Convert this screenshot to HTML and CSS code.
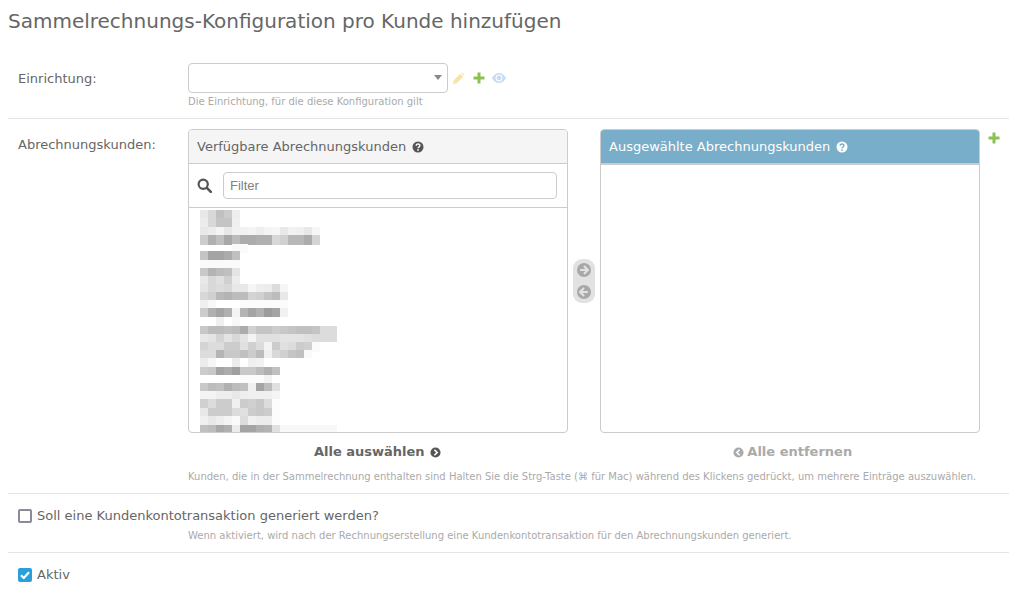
FILE: index.html
```html
<!DOCTYPE html>
<html lang="de">
<head>
<meta charset="utf-8">
<title>Sammelrechnungs-Konfiguration</title>
<link rel="stylesheet" href="styles.css">
</head>
<body>
<h1 class="title">Sammelrechnungs-Konfiguration pro Kunde hinzufügen</h1>
<section class="row row-facility">
  <label class="label label-facility">Einrichtung:</label>
  <div class="field">
    <div class="select-line">
      <div class="select"><span class="caret"></span></div>
      <svg class="rel-icon" viewBox="0 0 14 14"><path fill="#f6e3a6" d="M1 13l1-4 7-7 3 3-7 7zM10 1l1-.5 2.500 2.500-.5 1z"/></svg>
      <svg class="rel-icon plus" viewBox="0 0 12 12"><path fill="#8cc152" d="M4.500 .5h3v4H11.500v3H7.500v4h-3v-4H.5v-3h4z"/></svg>
      <svg class="rel-icon eye" viewBox="0 0 14 10"><path fill="#c6dcf0" d="M7 0c3 0 5.500 2 7 5-1.500 3-4 5-7 5S1.500 8 0 5c1.500-3 4-5 7-5z"/><circle cx="7" cy="5" r="3.400" fill="#fff"/><circle cx="7" cy="5" r="2.400" fill="#c6dcf0"/></svg>
    </div>
    <p class="hint hint-first">Die Einrichtung, für die diese Konfiguration gilt</p>
  </div>
</section>
<section class="row row-customers">
  <label class="label">Abrechnungskunden:</label>
  <div class="field">
    <div class="dual">
      <div class="panel">
        <div class="panel-head">Verfügbare Abrechnungskunden
          <svg class="help" viewBox="0 0 12 12"><circle cx="6" cy="6" r="5.500" fill="#555"/><path d="M4.200 4.700c0-2.300 3.700-2.300 3.700-.1 0 1.500-1.900 1.300-1.900 2.700" fill="none" stroke="#f5f5f5" stroke-width="1.500"/><rect x="5.200" y="8.200" width="1.600" height="1.600" fill="#f5f5f5"/></svg>
        </div>
        <div class="filter-bar">
          <svg class="search" viewBox="0 0 15 15"><circle cx="6.200" cy="6.200" r="4.600" fill="none" stroke="#555" stroke-width="2.200"/><path d="M9.800 9.800l4 4" stroke="#555" stroke-width="2.600" stroke-linecap="round"/></svg>
          <div class="filter">Filter</div>
        </div>
        <div class="list">
          <svg class="mosaic" width="137" height="225" viewBox="0 0 137 225" shape-rendering="crispEdges">
            <g transform="translate(0 0)"><rect x="0" width="8" fill="#e8e8e8"/><rect x="8" width="8" fill="#d8d8d8"/><rect x="16" width="8" fill="#c0c0c0"/><rect x="24" width="8" fill="#cccccc"/><rect x="32" width="8" fill="#eeeeee"/></g>
            <g transform="translate(0 8)"><rect x="0" width="8" fill="#ececec"/><rect x="8" width="8" fill="#d8d8d8"/><rect x="16" width="8" fill="#c4c4c4"/><rect x="24" width="8" fill="#c4c4c4"/><rect x="32" width="8" fill="#f0f0f0"/></g>
            <g transform="translate(0 17)"><rect x="0" width="8" fill="#e8e8e8"/><rect x="8" width="8" fill="#ececec"/><rect x="16" width="8" fill="#f4f4f4"/><rect x="24" width="8" fill="#e8e8e8"/><rect x="32" width="8" fill="#f2f2f2"/><rect x="40" width="8" fill="#f2f2f2"/><rect x="48" width="8" fill="#f4f4f4"/><rect x="56" width="8" fill="#eeeeee"/><rect x="64" width="8" fill="#f4f4f4"/><rect x="72" width="8" fill="#f6f6f6"/><rect x="80" width="8" fill="#e8e8e8"/><rect x="88" width="8" fill="#f2f2f2"/><rect x="96" width="8" fill="#f0f0f0"/><rect x="104" width="8" fill="#e8e8e8"/><rect x="112" width="8" fill="#f6f6f6"/></g>
            <g transform="translate(0 25)"><rect x="0" width="8" fill="#cccccc"/><rect x="8" width="8" fill="#b0b0b0"/><rect x="16" width="8" fill="#c0c0c0"/><rect x="24" width="8" fill="#a8a8a8"/><rect x="32" width="8" fill="#bcbcbc"/><rect x="40" width="8" fill="#acacac"/><rect x="48" width="8" fill="#acacac"/><rect x="56" width="8" fill="#b0b0b0"/><rect x="64" width="8" fill="#b0b0b0"/><rect x="72" width="8" fill="#d8d8d8"/><rect x="80" width="8" fill="#d0d0d0"/><rect x="88" width="8" fill="#b8b8b8"/><rect x="96" width="8" fill="#b8b8b8"/><rect x="104" width="8" fill="#acacac"/><rect x="112" width="8" fill="#d4d4d4"/></g>
            <g transform="translate(0 33.500)"><rect x="32" width="16" fill="#fafafa"/></g>
            <g transform="translate(0 41)"><rect x="0" width="8" fill="#c4c4c4"/><rect x="8" width="8" fill="#a4a4a4"/><rect x="16" width="8" fill="#a4a4a4"/><rect x="24" width="8" fill="#acacac"/><rect x="32" width="8" fill="#c0c0c0"/></g>
            <g transform="translate(0 50)"><rect x="0" width="40" fill="#fafafa"/></g>
            <g transform="translate(0 58)"><rect x="0" width="8" fill="#c8c8c8"/><rect x="8" width="8" fill="#b4b4b4"/><rect x="16" width="8" fill="#bcbcbc"/><rect x="24" width="8" fill="#c0c0c0"/><rect x="32" width="8" fill="#e4e4e4"/></g>
            <g transform="translate(0 66)"><rect x="0" width="8" fill="#e8e8e8"/><rect x="8" width="8" fill="#d8d8d8"/><rect x="16" width="8" fill="#e0e0e0"/><rect x="24" width="8" fill="#d0d0d0"/><rect x="32" width="8" fill="#ececec"/></g>
            <g transform="translate(0 74)"><rect x="0" width="8" fill="#e4e4e4"/><rect x="8" width="8" fill="#d8d8d8"/><rect x="16" width="8" fill="#dcdcdc"/><rect x="24" width="8" fill="#d8d8d8"/><rect x="32" width="8" fill="#e8e8e8"/><rect x="40" width="8" fill="#e8e8e8"/><rect x="48" width="8" fill="#f6f6f6"/><rect x="56" width="8" fill="#eeeeee"/><rect x="64" width="8" fill="#ececec"/><rect x="72" width="8" fill="#dcdcdc"/><rect x="80" width="8" fill="#f6f6f6"/></g>
            <g transform="translate(0 82)"><rect x="0" width="8" fill="#d8d8d8"/><rect x="8" width="8" fill="#d0d0d0"/><rect x="16" width="8" fill="#b8b8b8"/><rect x="24" width="8" fill="#b4b4b4"/><rect x="32" width="8" fill="#bcbcbc"/><rect x="40" width="8" fill="#bcbcbc"/><rect x="48" width="8" fill="#d4d4d4"/><rect x="56" width="8" fill="#d0d0d0"/><rect x="64" width="8" fill="#c4c4c4"/><rect x="72" width="8" fill="#bcbcbc"/><rect x="80" width="8" fill="#e8e8e8"/></g>
            <g transform="translate(0 90)"><rect x="0" width="8" fill="#f0f0f0"/><rect x="8" width="8" fill="#f8f8f8"/><rect x="16" width="24" fill="#ffffff"/><rect x="40" width="48" fill="#fbfbfb"/></g>
            <g transform="translate(0 98)"><rect x="0" width="8" fill="#cccccc"/><rect x="8" width="8" fill="#b0b0b0"/><rect x="16" width="8" fill="#a4a4a4"/><rect x="24" width="8" fill="#b0b0b0"/><rect x="32" width="8" fill="#f4f4f4"/><rect x="40" width="8" fill="#b4b4b4"/><rect x="48" width="8" fill="#a4a4a4"/><rect x="56" width="8" fill="#b0b0b0"/><rect x="64" width="8" fill="#9c9c9c"/><rect x="72" width="8" fill="#a4a4a4"/><rect x="80" width="8" fill="#f2f2f2"/></g>
            <g transform="translate(0 106.500)"><rect x="0" width="88" fill="#ffffff"/><rect x="16" width="8" fill="#f0f0f0"/><rect x="32" width="8" fill="#f8f8f8"/></g>
            <g transform="translate(0 116)"><rect x="0" width="8" fill="#c8c8c8"/><rect x="8" width="8" fill="#bcbcbc"/><rect x="16" width="8" fill="#bcbcbc"/><rect x="24" width="8" fill="#c0c0c0"/><rect x="32" width="8" fill="#bcbcbc"/><rect x="40" width="8" fill="#acacac"/><rect x="48" width="8" fill="#d0d0d0"/><rect x="56" width="8" fill="#c4c4c4"/><rect x="64" width="8" fill="#c4c4c4"/><rect x="72" width="8" fill="#cccccc"/><rect x="80" width="8" fill="#c8c8c8"/><rect x="88" width="8" fill="#c4c4c4"/><rect x="96" width="8" fill="#c0c0c0"/><rect x="104" width="8" fill="#c0c0c0"/><rect x="112" width="8" fill="#c4c4c4"/><rect x="120" width="17" fill="#dcdcdc"/></g>
            <g transform="translate(0 124)"><rect x="0" width="8" fill="#e8e8e8"/><rect x="8" width="8" fill="#e4e4e4"/><rect x="16" width="8" fill="#d4d4d4"/><rect x="24" width="8" fill="#e4e4e4"/><rect x="32" width="8" fill="#d8d8d8"/><rect x="40" width="8" fill="#e4e4e4"/><rect x="48" width="8" fill="#f4f4f4"/><rect x="56" width="24" fill="#e0e0e0"/><rect x="80" width="24" fill="#e4e4e4"/><rect x="104" width="8" fill="#e0e0e0"/><rect x="112" width="25" fill="#dcdcdc"/></g>
            <g transform="translate(0 132)"><rect x="0" width="8" fill="#d4d4d4"/><rect x="8" width="16" fill="#dcdcdc"/><rect x="24" width="16" fill="#cccccc"/><rect x="40" width="8" fill="#e0e0e0"/><rect x="48" width="8" fill="#d0d0d0"/><rect x="56" width="8" fill="#dcdcdc"/><rect x="64" width="8" fill="#f4f4f4"/><rect x="72" width="8" fill="#cccccc"/><rect x="80" width="8" fill="#e0e0e0"/><rect x="88" width="8" fill="#dcdcdc"/><rect x="96" width="8" fill="#cccccc"/><rect x="104" width="8" fill="#d0d0d0"/><rect x="112" width="8" fill="#fafafa"/><rect x="120" width="17" fill="#ffffff"/></g>
            <g transform="translate(0 140)"><rect x="0" width="16" fill="#dcdcdc"/><rect x="16" width="8" fill="#b4b4b4"/><rect x="24" width="16" fill="#c8c8c8"/><rect x="40" width="8" fill="#c0c0c0"/><rect x="48" width="8" fill="#cccccc"/><rect x="56" width="8" fill="#bcbcbc"/><rect x="64" width="8" fill="#f0f0f0"/><rect x="72" width="8" fill="#d8d8d8"/><rect x="80" width="8" fill="#d0d0d0"/><rect x="88" width="8" fill="#c4c4c4"/><rect x="96" width="8" fill="#c0c0c0"/><rect x="104" width="8" fill="#fafafa"/></g>
            <g transform="translate(0 148)"><rect x="0" width="112" fill="#ffffff"/><rect x="0" width="8" fill="#ececec"/><rect x="8" width="8" fill="#f6f6f6"/><rect x="32" width="8" fill="#ececec"/><rect x="48" width="8" fill="#f0f0f0"/><rect x="56" width="8" fill="#f2f2f2"/></g>
            <g transform="translate(0 156.500)"><rect x="0" width="8" fill="#cccccc"/><rect x="8" width="8" fill="#c8c8c8"/><rect x="16" width="8" fill="#a4a4a4"/><rect x="24" width="8" fill="#acacac"/><rect x="32" width="8" fill="#a0a0a0"/><rect x="40" width="16" fill="#c8c8c8"/><rect x="56" width="8" fill="#bcbcbc"/><rect x="64" width="8" fill="#b0b0b0"/><rect x="72" width="8" fill="#c0c0c0"/></g>
            <g transform="translate(0 165)"><rect x="0" width="80" fill="#ffffff"/><rect x="40" width="24" fill="#fbfbfb"/><rect x="64" width="8" fill="#f2f2f2"/></g>
            <g transform="translate(0 173)"><rect x="0" width="8" fill="#c8c8c8"/><rect x="8" width="8" fill="#bcbcbc"/><rect x="16" width="8" fill="#c0c0c0"/><rect x="24" width="8" fill="#b0b0b0"/><rect x="32" width="8" fill="#bcbcbc"/><rect x="40" width="8" fill="#c0c0c0"/><rect x="48" width="8" fill="#f0f0f0"/><rect x="56" width="8" fill="#a4a4a4"/><rect x="64" width="8" fill="#bcbcbc"/><rect x="72" width="8" fill="#e0e0e0"/></g>
            <g transform="translate(0 181)"><rect x="0" width="16" fill="#f4f4f4"/><rect x="16" width="16" fill="#eeeeee"/><rect x="32" width="8" fill="#e8e8e8"/><rect x="40" width="8" fill="#eeeeee"/><rect x="48" width="24" fill="#f0f0f0"/><rect x="72" width="8" fill="#f4f4f4"/></g>
            <g transform="translate(0 189)"><rect x="0" width="8" fill="#d0d0d0"/><rect x="8" width="8" fill="#dcdcdc"/><rect x="16" width="16" fill="#cccccc"/><rect x="32" width="8" fill="#f0f0f0"/><rect x="40" width="8" fill="#cccccc"/><rect x="48" width="8" fill="#d0d0d0"/><rect x="56" width="8" fill="#c8c8c8"/><rect x="64" width="8" fill="#dcdcdc"/><rect x="72" width="8" fill="#fcfcfc"/></g>
            <g transform="translate(0 197.500)"><rect x="0" width="8" fill="#e8e8e8"/><rect x="8" width="24" fill="#cccccc"/><rect x="32" width="8" fill="#dcdcdc"/><rect x="40" width="8" fill="#e0e0e0"/><rect x="48" width="8" fill="#cccccc"/><rect x="56" width="8" fill="#c8c8c8"/><rect x="64" width="8" fill="#cccccc"/><rect x="72" width="8" fill="#fcfcfc"/></g>
            <g transform="translate(0 206)"><rect x="0" width="8" fill="#f0f0f0"/><rect x="8" width="8" fill="#e8e8e8"/><rect x="16" width="8" fill="#eeeeee"/><rect x="24" width="8" fill="#f4f4f4"/><rect x="32" width="8" fill="#fafafa"/><rect x="40" width="8" fill="#dcdcdc"/><rect x="48" width="8" fill="#f0f0f0"/><rect x="56" width="16" fill="#ececec"/><rect x="72" width="8" fill="#fcfcfc"/></g>
            <g transform="translate(0 214.500)"><rect x="0" width="8" fill="#c0c0c0"/><rect x="8" width="8" fill="#bcbcbc"/><rect x="16" width="8" fill="#a8a8a8"/><rect x="24" width="8" fill="#b0b0b0"/><rect x="32" width="8" fill="#ececec"/><rect x="40" width="16" fill="#a4a4a4"/><rect x="56" width="8" fill="#b0b0b0"/><rect x="64" width="8" fill="#b4b4b4"/><rect x="72" width="8" fill="#e0e0e0"/><rect x="80" width="57" fill="#f8f8f8"/></g>
          </svg>
        </div>
      </div>
      <div class="movers">
        <svg class="mover" viewBox="0 0 16 16"><circle cx="8" cy="8" r="8" fill="#a8a8a8"/><path d="M8 3.500L12.500 8 8 12.500M12 8H3.500" fill="none" stroke="#e2e2e2" stroke-width="2.400"/></svg>
        <svg class="mover" viewBox="0 0 16 16"><circle cx="8" cy="8" r="8" fill="#a8a8a8"/><path d="M8 3.500L3.500 8 8 12.500M4 8h8.500" fill="none" stroke="#e2e2e2" stroke-width="2.400"/></svg>
      </div>
      <div class="panel">
        <div class="panel-head panel-head-blue">Ausgewählte Abrechnungskunden
          <svg class="help" viewBox="0 0 12 12"><circle cx="6" cy="6" r="5.500" fill="#fff"/><path d="M4.200 4.700c0-2.300 3.700-2.300 3.700-.1 0 1.500-1.900 1.300-1.900 2.700" fill="none" stroke="#78aeca" stroke-width="1.500"/><rect x="5.200" y="8.200" width="1.600" height="1.600" fill="#78aeca"/></svg>
        </div>
      </div>
      <svg class="add-side" viewBox="0 0 12 12"><path fill="#8cc152" d="M4.500 .5h3v4H11.500v3H7.500v4h-3v-4H.5v-3h4z"/></svg>
    </div>
    <div class="actions">
      <div class="action">Alle auswählen
        <svg class="chev" viewBox="0 0 12 12"><circle cx="6" cy="6" r="5.500" fill="#555"/><path d="M4.800 3l3 3-3 3" fill="none" stroke="#fff" stroke-width="1.800"/></svg>
      </div>
      <div class="action action-off">
        <svg class="chev chev-left" viewBox="0 0 12 12"><circle cx="6" cy="6" r="5.500" fill="#aaa"/><path d="M7.200 3l-3 3 3 3" fill="none" stroke="#fff" stroke-width="1.800"/></svg>
        Alle entfernen
      </div>
    </div>
    <p class="hint hint-wide">Kunden, die in der Sammelrechnung enthalten sind Halten Sie die Strg-Taste (⌘ für Mac) während des Klickens gedrückt, um mehrere Einträge auszuwählen.</p>
  </div>
</section>
<section class="row row-check">
  <label class="check-line"><span class="box"></span>Soll eine Kundenkontotransaktion generiert werden?</label>
  <p class="hint hint-indent">Wenn aktiviert, wird nach der Rechnungserstellung eine Kundenkontotransaktion für den Abrechnungskunden generiert.</p>
</section>
<section class="row-last">
  <label class="check-line"><span class="box box-on"><svg class="tick" viewBox="0 0 14 14"><path d="M3 7.200l2.800 2.800L11 4.300" fill="none" stroke="#fff" stroke-width="2.200"/></svg></span>Aktiv</label>
</section>
</body>
</html>
```
FILE: styles.css
```css
* { box-sizing: border-box; }
html, body { margin: 0; height: 100%; overflow: hidden; }
body { background: #fff; color: #666; font-family: "DejaVu Sans", sans-serif; font-size: 13px; padding: 0 0 0 8px; }
.title { margin: 0; padding-top: 10px; height: 43px; font-size: 20px; line-height: 23px; font-weight: 400; color: #666; }
.row { border-bottom: 1px solid #e5e5e5; display: flex; }
.row-facility { height: 76px; padding-top: 20px; }
.row-customers { height: 375px; padding-top: 10px; }
.row-check { display: block; height: 59px; padding: 14px 0 0 10px; }
.row-last { padding: 14px 0 0 10px; }
.label { width: 180px; flex: none; padding: 1px 0 0 10px; line-height: 30px; }
.label-facility { }
.field { flex: 1; min-width: 0; }
.select-line { display: flex; align-items: center; height: 30px; }
.select { width: 260px; height: 30px; border: 1px solid #ccc; border-radius: 4px; position: relative; background: #fff; }
.caret { position: absolute; right: 5px; top: 11px; border: 4.500px solid transparent; border-top: 5px solid #888; border-bottom: 0; }
.rel-icon { width: 13px; height: 13px; margin-left: 4px; }
.rel-icon.plus { width: 12px; height: 12px; margin-left: 8px; }
.rel-icon.eye { width: 14px; height: 10px; margin-left: 7px; }
.hint { margin: 0; font-size: 10px; line-height: 14px; color: #aaa; }
.hint-first { margin-top: 2px; }
.hint-wide { margin-top: 10px; }
.hint-indent { margin: 5px 0 0 170px; }
.dual { display: flex; height: 304px; align-items: stretch; }
.panel { width: 380px; flex: none; border: 1px solid #ccc; border-radius: 4px; overflow: hidden; }
.panel-head { height: 34px; background: #f5f5f5; border-bottom: 1px solid #ccc; padding-left: 8px; line-height: 33px; white-space: nowrap; }
.panel-head-blue { height: 35px; background: #78aeca; color: #fff; border-bottom-width: 2px; }
.help { width: 12px; height: 12px; margin-left: 2px; vertical-align: -2px; }
.filter-bar { height: 44px; border-bottom: 1px solid #ccc; display: flex; align-items: center; padding: 0 10px 0 8px; }
.search { width: 15px; height: 15px; flex: none; margin-right: 11px; }
.filter { flex: 1; height: 27px; border: 1px solid #ccc; border-radius: 4px; padding-left: 6px; line-height: 25px; font-family: "Liberation Sans", sans-serif; font-size: 13px; color: #808080; }
.list { padding: 2px 0 0 11px; overflow: hidden; }
.mosaic { display: block; }
.mosaic rect { height: 9.5px; }
.movers { width: 22px; height: 44px; margin: 130px 5px 0; background: #e2e2e2; border-radius: 9px; display: flex; flex-direction: column; gap: 8px; align-items: center; padding: 4px 0 0; }
.mover { width: 14px; height: 14px; }
.add-side { width: 12px; height: 12px; margin: 3px 0 0 8px; flex: none; }
.actions { display: flex; margin-top: 10px; }
.action { width: 380px; text-align: center; font-weight: 700; line-height: 17px; white-space: nowrap; }
.action-off { margin-left: 32px; padding-left: 4px; color: #aaa; }
.chev { width: 11px; height: 11px; vertical-align: -2px; margin: 0 1px; }
.chev-left { margin: 0 -1px 0 1px; }
.check-line { display: flex; align-items: center; line-height: 16px; }
.box { width: 14px; height: 14px; margin-right: 5px; border: 2px solid #8a8a9a; border-radius: 2px; flex: none; background: #fff; }
.box-on { border: 0; background: #2a9fdc; }
.tick { display: block; width: 14px; height: 14px; }
```
